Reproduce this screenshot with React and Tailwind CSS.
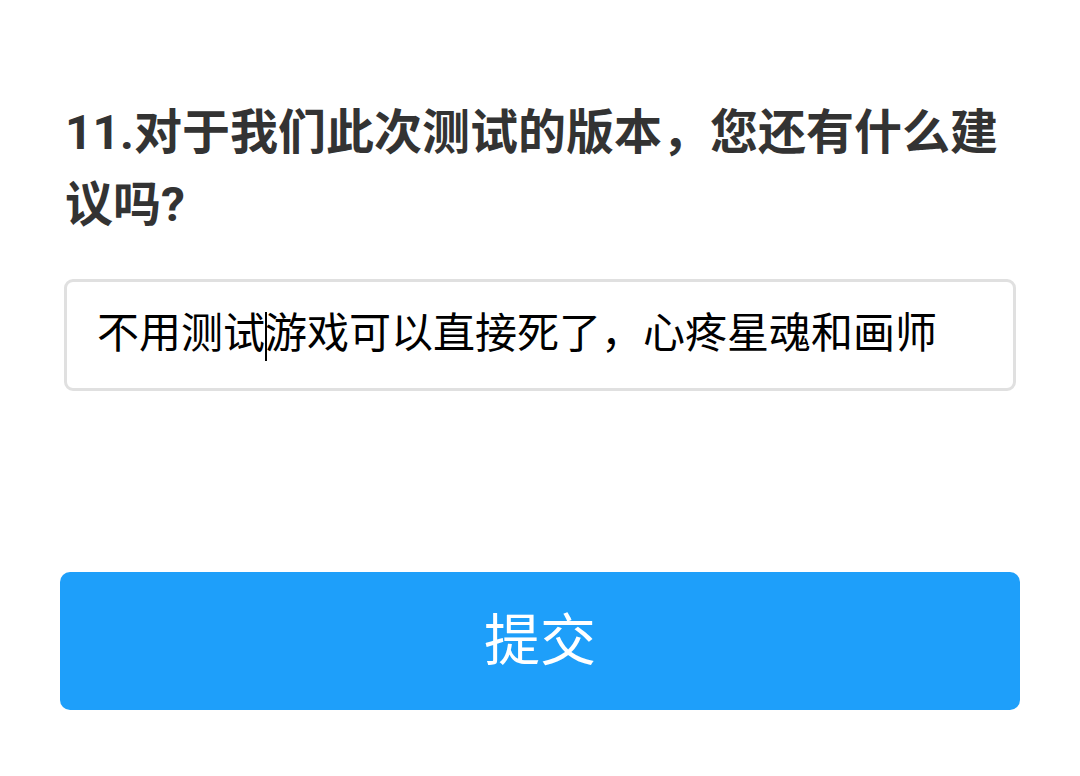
import React from 'react';

const FONT = { fontFamily: 'Roboto, "Noto Sans CJK SC", "Noto Sans", sans-serif' };

export default function App() {
  return (
    <div className="min-h-[776px] w-[1080px] bg-white px-[60px] pt-[97px]" style={FONT}>
      {/* question title */}
      <h2 className="pl-[5px] pr-[20px] text-[48px] font-bold leading-[72px] text-[#333333]">
        11.对于我们此次测试的版本，您还有什么建议吗?
      </h2>

      {/* answer box */}
      <div className="mx-[4px] mt-[38px] flex h-[112px] items-center rounded-[9px] border-[3px] border-[#e0e0e0] bg-white pl-[30px]">
        <p className="whitespace-nowrap text-[42px] leading-[50px] text-black">
          不用测试
          <span className="mr-[-2px] inline-block h-[49px] w-[2px] bg-black align-middle" />
          游戏可以直接死了，心疼星魂和画师
        </p>
      </div>

      {/* submit */}
      <button className="mt-[181px] flex h-[138px] w-full items-center justify-center rounded-[10px] bg-[#1e9ffa] text-[56px] text-white">
        提交
      </button>
    </div>
  );
}
